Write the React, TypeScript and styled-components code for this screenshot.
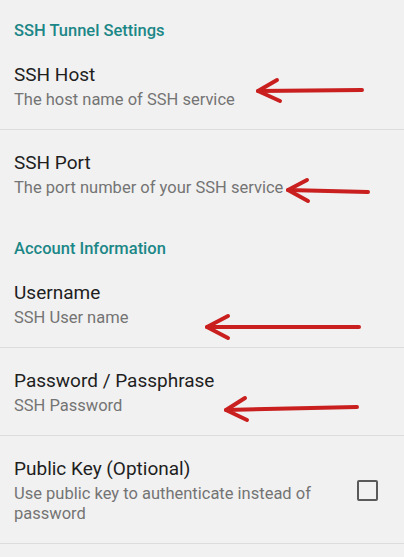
import React from "react";
import styled, { createGlobalStyle } from "styled-components";

const Global = createGlobalStyle`
  html, body { margin: 0; padding: 0; background: #f1f1f1; }
  body { font-family: Roboto, "Noto Sans", sans-serif; -webkit-font-smoothing: antialiased; }
`;

const Page = styled.div`
  position: relative;
  width: 404px;
  height: 557px;
  overflow: hidden;
  background: #f1f1f1;
`;

const CategoryHeader = styled.div`
  height: 42px;
  box-sizing: border-box;
  padding: 20px 14px 0;
  font-size: 16.5px;
  line-height: 22px;
  font-weight: 500;
  color: #1c8787;
`;

const Item = styled.div<{ $divider?: boolean }>`
  display: flex;
  align-items: center;
  box-sizing: border-box;
  padding: 21px 26px 19px 14px;
  border-bottom: ${(p) => (p.$divider ? "1px solid #dcdcdc" : "1px solid transparent")};
`;

const TextCol = styled.div`
  flex: 1;
  min-width: 0;
  max-width: 320px;
`;

const Title = styled.div`
  font-size: 19px;
  line-height: 24px;
  color: #1e1e1e;
`;

const Summary = styled.div`
  margin-top: 3px;
  font-size: 16.5px;
  line-height: 20px;
  color: #747474;
`;

const CheckBox = styled.div`
  width: 17px;
  height: 17px;
  border: 2px solid #5a5a5a;
  border-radius: 2px;
  margin-left: auto;
  flex-shrink: 0;
`;

const Arrows = styled.svg`
  position: absolute;
  left: 0;
  top: 0;
  pointer-events: none;
`;

type Arrow = { tip: [number, number]; tail: [number, number]; up: [number, number]; down: [number, number] };

const arrows: Arrow[] = [
  { tip: [258, 91], tail: [362, 90], up: [277, 80], down: [280, 101] },
  { tip: [288, 190], tail: [368, 192], up: [307, 180], down: [308, 201] },
  { tip: [207, 327], tail: [359, 327], up: [228, 316], down: [228, 338] },
  { tip: [226, 410], tail: [357, 407], up: [245, 398], down: [247, 420] },
];

export default function App() {
  return (
    <Page>
      <Global />
      <CategoryHeader>SSH Tunnel Settings</CategoryHeader>
      <Item $divider>
        <TextCol>
          <Title>SSH Host</Title>
          <Summary>The host name of SSH service</Summary>
        </TextCol>
      </Item>
      <Item>
        <TextCol>
          <Title>SSH Port</Title>
          <Summary>The port number of your SSH service</Summary>
        </TextCol>
      </Item>
      <CategoryHeader>Account Information</CategoryHeader>
      <Item $divider>
        <TextCol>
          <Title>Username</Title>
          <Summary>SSH User name</Summary>
        </TextCol>
      </Item>
      <Item $divider>
        <TextCol>
          <Title>Password / Passphrase</Title>
          <Summary>SSH Password</Summary>
        </TextCol>
      </Item>
      <Item $divider>
        <TextCol>
          <Title>Public Key (Optional)</Title>
          <Summary>Use public key to authenticate instead of password</Summary>
        </TextCol>
        <CheckBox />
      </Item>
      <Arrows width="404" height="557" viewBox="0 0 404 557">
        {arrows.map((a, i) => (
          <g key={i} stroke="#c91f1f" strokeWidth={4} strokeLinecap="round" strokeLinejoin="round" fill="none">
            <line x1={a.tip[0]} y1={a.tip[1]} x2={a.tail[0]} y2={a.tail[1]} />
            <polyline points={`${a.up[0]},${a.up[1]} ${a.tip[0]},${a.tip[1]} ${a.down[0]},${a.down[1]}`} />
          </g>
        ))}
      </Arrows>
    </Page>
  );
}
